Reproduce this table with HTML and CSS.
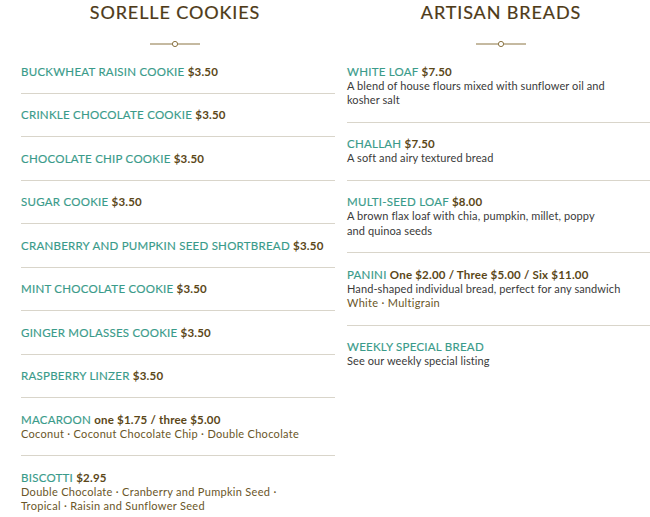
FILE: index.html
```html
<!DOCTYPE html>
<html>
<head>
<meta charset="utf-8">
<link rel="stylesheet" href="styles.css">
</head>
<body>
<div class="menu">
  <section class="col">
    <header class="col-head">
      <h2 class="title">SORELLE COOKIES</h2>
      <svg class="orn" width="50" height="8" viewBox="0 0 50 8"><line x1="0" y1="4" x2="22" y2="4"/><circle cx="25" cy="4" r="2.6"/><line x1="28" y1="4" x2="50" y2="4"/></svg>
    </header>
    <ul class="list">
      <li class="item"><div class="name">BUCKWHEAT RAISIN COOKIE <span class="price">$3.50</span></div></li>
      <li class="item"><div class="name">CRINKLE CHOCOLATE COOKIE <span class="price">$3.50</span></div></li>
      <li class="item"><div class="name">CHOCOLATE CHIP COOKIE <span class="price">$3.50</span></div></li>
      <li class="item"><div class="name">SUGAR COOKIE <span class="price">$3.50</span></div></li>
      <li class="item"><div class="name">CRANBERRY AND PUMPKIN SEED SHORTBREAD <span class="price">$3.50</span></div></li>
      <li class="item"><div class="name">MINT CHOCOLATE COOKIE <span class="price">$3.50</span></div></li>
      <li class="item"><div class="name">GINGER MOLASSES COOKIE <span class="price">$3.50</span></div></li>
      <li class="item"><div class="name">RASPBERRY LINZER <span class="price">$3.50</span></div></li>
      <li class="item"><div class="name">MACAROON <span class="price">one $1.75 / three $5.00</span></div><div class="var">Coconut · Coconut Chocolate Chip · Double Chocolate</div></li>
      <li class="item"><div class="name">BISCOTTI <span class="price">$2.95</span></div><div class="var">Double Chocolate · Cranberry and Pumpkin Seed ·<br>Tropical · Raisin and Sunflower Seed</div></li>
    </ul>
  </section>
  <section class="col">
    <header class="col-head">
      <h2 class="title">ARTISAN BREADS</h2>
      <svg class="orn" width="50" height="8" viewBox="0 0 50 8"><line x1="0" y1="4" x2="22" y2="4"/><circle cx="25" cy="4" r="2.6"/><line x1="28" y1="4" x2="50" y2="4"/></svg>
    </header>
    <ul class="list">
      <li class="item"><div class="name">WHITE LOAF <span class="price">$7.50</span></div><div class="desc">A blend of house flours mixed with sunflower oil and<br>kosher salt</div></li>
      <li class="item"><div class="name">CHALLAH <span class="price">$7.50</span></div><div class="desc">A soft and airy textured bread</div></li>
      <li class="item"><div class="name">MULTI-SEED LOAF <span class="price">$8.00</span></div><div class="desc">A brown flax loaf with chia, pumpkin, millet, poppy<br>and quinoa seeds</div></li>
      <li class="item"><div class="name">PANINI <span class="price">One $2.00 / Three $5.00 / Six $11.00</span></div><div class="desc">Hand-shaped individual bread, perfect for any sandwich</div><div class="var">White · Multigrain</div></li>
      <li class="item last"><div class="name">WEEKLY SPECIAL BREAD</div><div class="desc">See our weekly special listing</div></li>
    </ul>
  </section>
</div>
</body>
</html>
```
FILE: styles.css
```css
html, body {
  margin: 0;
  padding: 0;
  overflow: hidden;
  background: #ffffff;
}
body {
  width: 650px;
  height: 517px;
  font-family: Lato, "Open Sans", sans-serif;
}
.menu {
  display: grid;
  grid-template-columns: 314px 314px;
  column-gap: 12px;
  padding-left: 21px;
}
.col-head {
  width: 308px;
  display: flex;
  flex-direction: column;
  align-items: center;
}
.title {
  margin: 0;
  font-size: 18px;
  line-height: 24px;
  font-weight: 400;
  letter-spacing: 0.9px;
  color: #4e3a18;
  -webkit-text-stroke: 0.2px #4e3a18;
}
.orn {
  display: block;
  margin-top: 16px;
}
.orn line {
  stroke: #8b7443;
  stroke-width: 1;
}
.orn circle {
  fill: #fff;
  stroke: #8b7443;
  stroke-width: 1;
}
.list {
  list-style: none;
  margin: 2px 0 0 0;
  padding: 0;
}
.item {
  padding: 13.5px 0 14px 0;
  border-bottom: 1px solid #d9d5ca;
}
.item.last {
  border-bottom: none;
}
.name {
  font-size: 11.5px;
  line-height: 15px;
  letter-spacing: 0.25px;
  color: #3a9b8a;
  white-space: nowrap;
  -webkit-text-stroke: 0.15px #3a9b8a;
}
.price {
  color: #5b4718;
  font-weight: 700;
  letter-spacing: 0.2px;
  -webkit-text-stroke: 0;
}
.desc, .var {
  font-size: 11px;
  line-height: 14.5px;
}
.desc {
  color: #3a3a3a;
  letter-spacing: 0.1px;
}
.var {
  color: #6a5628;
  letter-spacing: 0.3px;
}
```
